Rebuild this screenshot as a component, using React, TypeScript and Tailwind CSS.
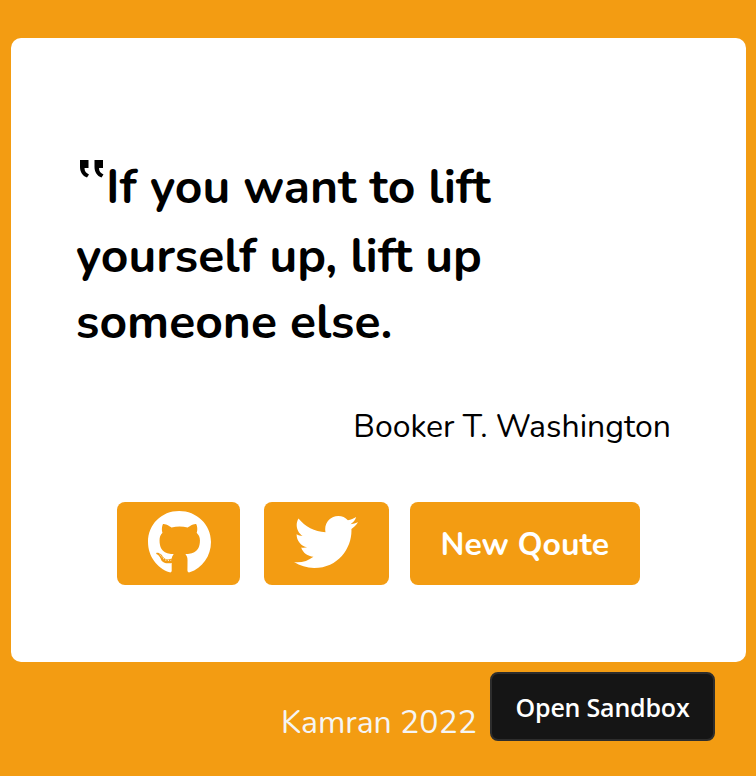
import { FaGithub, FaTwitter } from "react-icons/fa";

const rounded = "font-['Nunito','Lato',sans-serif]";

export default function App() {
  return (
    <div className={`flex h-[776px] w-[756px] flex-col overflow-hidden bg-[#f39c12] pt-[38.4px] ${rounded}`}>
      <main className="ml-[11px] h-[624px] w-[735px] rounded-[10px] bg-white pt-[115px]">
        <h1 className="ml-[65px] text-[48px] font-bold text-black">
          <span className="flex h-[70px] items-start whitespace-nowrap leading-[69px]">
            <svg className="ml-[4px] mt-[7px] h-[19px] w-[26px] shrink-0" viewBox="0 0 26 19" fill="currentColor">
              <path d="M0 0h8.500v8H4.500c0 3.500 1.500 5 4.500 6.500L7 17.500C2.500 16 0 12 0 7z" />
              <path d="M14.500 0h8.500v8H19c0 3.500 1.500 5 4.500 6.500l-2 3C17 16 14.500 12 14.500 7z" />
            </svg>
            <span>If you want to lift</span>
          </span>
          <span className="block h-[66px] whitespace-nowrap leading-[67px]">yourself up, lift up</span>
          <span className="block h-[67px] whitespace-nowrap leading-[67px]">someone else.</span>
        </h1>
        <p className="mt-[47px] pr-[75px] text-right text-[32px] leading-[48px] text-black">Booker T. Washington</p>
        <div className="mt-[51px] flex pl-[106px]">
          <button aria-label="GitHub" className="flex h-[83px] w-[123px] items-start justify-center rounded-lg bg-[#f39c12] pl-[1px] pt-[8px] text-white">
            <FaGithub size={65} />
          </button>
          <button aria-label="Twitter" className="ml-6 flex h-[83px] w-[125px] items-start justify-center rounded-lg bg-[#f39c12] pr-[2px] pt-[8px] text-white">
            <FaTwitter size={64} />
          </button>
          <button className="ml-[20.5px] h-[83px] w-[230.5px] whitespace-nowrap rounded-lg bg-[#f39c12] pt-[2px] text-[32px] font-bold text-white">New Qoute</button>
        </div>
      </main>
      <footer className="flex items-start pl-[281px] pt-[9.6px]">
        <p className="mt-[28px] w-[209px] whitespace-nowrap text-[32px] leading-[46px] text-[#f5f5f5]">Kamran 2022</p>
        <button className="h-[69px] w-[225px] rounded-lg border-2 border-[#2d2d2d] bg-[#151515] pt-[3px] font-['Segoe_UI','Open_Sans',sans-serif] text-[25px] tracking-[-0.2px] font-semibold whitespace-nowrap text-white">Open Sandbox</button>
      </footer>
    </div>
  );
}
